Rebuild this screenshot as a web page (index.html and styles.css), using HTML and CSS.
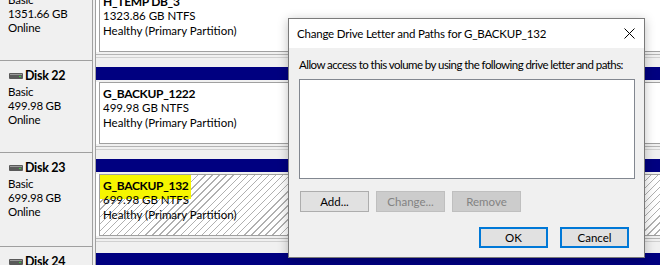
FILE: index.html
```html
<!DOCTYPE html>
<html>
<head>
<meta charset="utf-8">
<link rel="stylesheet" href="styles.css">
</head>
<body>
<div class="view">
  <div class="disks">
    <div class="row">
      <div class="label">
        <div class="title"><svg class="dicon" width="14" height="6" viewBox="0 0 14 6"><rect x="0" y="0" width="14" height="6" rx="1" fill="#5a5a5a"/><rect x="1" y="1" width="12" height="1" fill="#9a9a9a"/><rect x="10" y="3" width="2" height="1" fill="#3ecf3e"/></svg><b>Disk 21</b></div>
        <div>Basic</div>
        <div>1351.66 GB</div>
        <div>Online</div>
      </div>
      <div class="parts">
        <div class="bar"></div>
        <div class="part">
          <div class="inner">
            <div class="pname">H_TEMP DB_3</div>
            <div>1323.86 GB NTFS</div>
            <div>Healthy (Primary Partition)</div>
          </div>
        </div>
        <div class="foot"></div>
      </div>
    </div>
    <div class="row">
      <div class="label">
        <div class="title"><svg class="dicon" width="14" height="6" viewBox="0 0 14 6"><rect x="0" y="0" width="14" height="6" rx="1" fill="#5a5a5a"/><rect x="1" y="1" width="12" height="1" fill="#9a9a9a"/><rect x="10" y="3" width="2" height="1" fill="#3ecf3e"/></svg><b>Disk 22</b></div>
        <div>Basic</div>
        <div>499.98 GB</div>
        <div>Online</div>
      </div>
      <div class="parts">
        <div class="bar"></div>
        <div class="part">
          <div class="inner">
            <div class="pname">G_BACKUP_1222</div>
            <div>499.98 GB NTFS</div>
            <div>Healthy (Primary Partition)</div>
          </div>
        </div>
        <div class="foot"></div>
      </div>
    </div>
    <div class="row tall">
      <div class="label">
        <div class="title"><svg class="dicon" width="14" height="6" viewBox="0 0 14 6"><rect x="0" y="0" width="14" height="6" rx="1" fill="#5a5a5a"/><rect x="1" y="1" width="12" height="1" fill="#9a9a9a"/><rect x="10" y="3" width="2" height="1" fill="#3ecf3e"/></svg><b>Disk 23</b></div>
        <div>Basic</div>
        <div>699.98 GB</div>
        <div>Online</div>
      </div>
      <div class="parts">
        <div class="bar"></div>
        <div class="part">
          <div class="inner hatched">
            <div class="pname"><span class="hl">G_BACKUP_132</span></div>
            <div>699.98 GB NTFS</div>
            <div>Healthy (Primary Partition)</div>
          </div>
        </div>
        <div class="foot"></div>
      </div>
    </div>
    <div class="row">
      <div class="label">
        <div class="title"><svg class="dicon" width="14" height="6" viewBox="0 0 14 6"><rect x="0" y="0" width="14" height="6" rx="1" fill="#5a5a5a"/><rect x="1" y="1" width="12" height="1" fill="#9a9a9a"/><rect x="10" y="3" width="2" height="1" fill="#3ecf3e"/></svg><b>Disk 24</b></div>
        <div>Basic</div>
        <div>499.98 GB</div>
        <div>Online</div>
      </div>
      <div class="parts">
        <div class="bar"></div>
        <div class="part">
          <div class="inner">
            <div class="pname">G_BACKUP_24</div>
          </div>
        </div>
      </div>
    </div>
  </div>

  <div class="dialog">
    <div class="dtitle">
      <span>Change Drive Letter and Paths for G_BACKUP_132</span>
      <svg class="close" width="11" height="11" viewBox="0 0 11 11"><path d="M0.5 0.5 L10.5 10.5 M10.5 0.5 L0.5 10.5" stroke="#000" stroke-width="1" fill="none"/></svg>
    </div>
    <div class="dbody">
      <div class="dlabel">Allow access to this volume by using the following drive letter and paths:</div>
      <div class="listbox"></div>
      <div class="btnrow">
        <button class="btn">Add...</button>
        <button class="btn dis">Change...</button>
        <button class="btn dis">Remove</button>
      </div>
      <div class="okrow">
        <button class="btn def">OK</button>
        <button class="btn def">Cancel</button>
      </div>
    </div>
  </div>
</div>
</body>
</html>
```
FILE: styles.css
```css
html, body {
  margin: 0;
  padding: 0;
}
body {
  width: 660px;
  height: 265px;
  overflow: hidden;
  background: #f0f0f0;
  font-family: "Lato", "Noto Sans", sans-serif;
  font-size: 11.5px;
  color: #000;
}
.view {
  position: relative;
  width: 660px;
  height: 265px;
  overflow: hidden;
}
.disks {
  margin-top: -31px;
}
.row {
  display: flex;
  height: 92px;
}
.row.tall {
  height: 94px;
}
.label {
  width: 93px;
  flex: none;
  box-sizing: border-box;
  border-right: 1px solid #a0a0a0;
  border-bottom: 1px solid #a0a0a0;
  padding: 7px 0 0 8px;
  line-height: 14px;
  background: #f0f0f0;
  white-space: nowrap;
  letter-spacing: -0.2px;
}
.label .title {
  display: flex;
  align-items: center;
  margin-left: 1px;
  margin-bottom: 1px;
  font-size: 12.5px;
  line-height: 16px;
  letter-spacing: -0.3px;
}
.dicon {
  margin-right: 2px;
}
.parts {
  flex: 1;
  margin-left: 2px;
  border-left: 1px solid #a0a0a0;
  display: flex;
  flex-direction: column;
  min-width: 0;
}
.bar {
  margin-top: 6px;
  height: 13px;
  background: #000080;
  flex: none;
}
.part {
  margin-top: 2px;
  background: #fff;
  padding: 0 0 0 3px;
  flex: none;
}
.inner {
  height: 62px;
  box-sizing: border-box;
  border: 1px solid #a0a0a0;
  border-right: none;
  padding: 3px 0 0 3px;
  line-height: 14.5px;
  background: #fff;
  white-space: nowrap;
}
.inner.hatched {
  background: repeating-linear-gradient(135deg, #fff 0 4px, #b0b0b0 4px 5px);
}
.pname {
  font-weight: bold;
  font-size: 12px;
  line-height: 15px;
  letter-spacing: -0.3px;
}
.hl {
  background: #f6f600;
  padding: 3px 2px 6px 3px;
  margin-left: -3px;
}
.foot {
  margin-top: 2px;
  height: 2px;
  border-top: 1px solid #b4b4b4;
  border-bottom: 1px solid #d0d0d0;
}

/* dialog */
.dialog {
  position: absolute;
  left: 288px;
  top: 18px;
  width: 357px;
  height: 240px;
  box-sizing: border-box;
  border: 1px solid #7a7a7a;
  background: #f0f0f0;
  box-shadow: 0 2px 10px rgba(0, 0, 0, 0.25);
  display: flex;
  flex-direction: column;
}
.dtitle {
  height: 29px;
  background: #fff;
  display: flex;
  align-items: center;
  justify-content: space-between;
  padding: 0 9px 0 8px;
  font-size: 11.5px;
  letter-spacing: -0.2px;
  flex: none;
}
.close {
  display: block;
}
.dbody {
  padding: 9px 9px 0 10px;
}
.dlabel {
  line-height: 16px;
  white-space: nowrap;
  letter-spacing: -0.55px;
}
.listbox {
  margin-top: 6px;
  height: 100px;
  box-sizing: border-box;
  border: 1px solid #828790;
  background: #fff;
}
.btnrow {
  display: flex;
  gap: 7px;
  margin: 12px 0 0 1px;
}
.okrow {
  display: flex;
  justify-content: flex-end;
  gap: 12px;
  margin: 15px 6px 0 0;
}
.btn {
  width: 69px;
  height: 21px;
  box-sizing: border-box;
  font-family: inherit;
  font-size: 11.5px;
  color: #000;
  background: #e1e1e1;
  border: 1px solid #adadad;
  border-radius: 0;
  padding: 0;
  line-height: 17px;
}
.btn.dis {
  background: #cccccc;
  border-color: #bfbfbf;
  color: #838383;
}
.btn.def {
  border: 2px solid #0078d7;
}
```
